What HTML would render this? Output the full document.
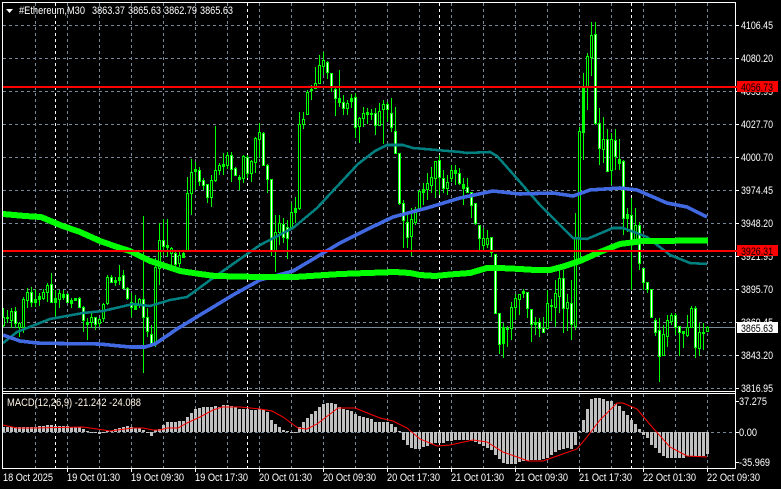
<!DOCTYPE html>
<html><head><meta charset="utf-8"><title>Ethereum M30</title>
<style>
html,body{margin:0;padding:0;background:#000;width:781px;height:489px;overflow:hidden}
svg{display:block}
text{font-family:"Liberation Sans",sans-serif;font-size:11px;fill:#fff}
</style></head><body>
<svg width="781" height="489" viewBox="0 0 781 489" xmlns="http://www.w3.org/2000/svg">
<rect width="781" height="489" fill="#000"/>
<g shape-rendering="crispEdges" fill="none">
<!-- grid -->
<path stroke="#778899" stroke-dasharray="3 3" d="M3 25.5H735M3 58.5H735M3 91.5H735M3 124.5H735M3 157.5H735M3 190.5H735M3 223.5H735M3 256.5H735M3 289.5H735M3 322.5H735M3 355.5H735M3 388.5H735M3 432.5H735"/>
<path stroke="#778899" stroke-dasharray="3 3" d="M35.5 3V391M67.5 3V391M99.5 3V391M131.5 3V391M163.5 3V391M195.5 3V391M227.5 3V391M259.5 3V391M291.5 3V391M323.5 3V391M355.5 3V391M387.5 3V391M419.5 3V391M451.5 3V391M483.5 3V391M515.5 3V391M547.5 3V391M579.5 3V391M611.5 3V391M643.5 3V391M675.5 3V391M707.5 3V391M35.5 394V468M67.5 394V468M99.5 394V468M131.5 394V468M163.5 394V468M195.5 394V468M227.5 394V468M259.5 394V468M291.5 394V468M323.5 394V468M355.5 394V468M387.5 394V468M419.5 394V468M451.5 394V468M483.5 394V468M515.5 394V468M547.5 394V468M579.5 394V468M611.5 394V468M643.5 394V468M675.5 394V468M707.5 394V468"/>
<path stroke="#fff" stroke-dasharray="3 3" d="M55.5 3V391M247.5 3V391M439.5 3V391M631.5 3V391M55.5 394V468M247.5 394V468M439.5 394V468M631.5 394V468"/>
<!-- bid line -->
<path stroke="#778899" d="M3 327.5H735"/>
<!-- wicks -->
<path stroke="#00ff00" d="M3.5 308V327M7.5 310V323M11.5 308V328M15.5 307V328M19.5 322V337M23.5 297V333M27.5 288V308M31.5 287V307M35.5 289V307M39.5 293V306M43.5 289V300M47.5 283V302M51.5 273V302M55.5 290V317M59.5 290V308M63.5 290V300M67.5 293V302M71.5 298V308M75.5 298V301M79.5 297V308M83.5 306V332M87.5 318V340M91.5 312V328M95.5 317V330M99.5 318V327M103.5 303V322M107.5 275V305M111.5 275V283M115.5 277V286M119.5 265V285M123.5 270V288M127.5 287V300M131.5 293V317M135.5 295V310M139.5 298V308M143.5 216V373M147.5 308V337M151.5 325V347M155.5 258V347M159.5 223V285M163.5 219V255M167.5 219V257M171.5 247V267M175.5 252V270M179.5 252V267M183.5 252V257M187.5 177V252M191.5 159V215M195.5 162V190M199.5 167V186M203.5 178V190M207.5 184V203M211.5 175V207M215.5 126V182M219.5 163V175M223.5 153V175M227.5 152V169M231.5 152V182M235.5 167V176M239.5 175V190M243.5 155V183M247.5 155V178M251.5 160V182M255.5 137V173M259.5 123V158M263.5 132V166M267.5 164V193M271.5 179V256M275.5 215V272M279.5 215V245M283.5 218V243M287.5 220V259M291.5 203V228M295.5 197V223M299.5 112V210M303.5 112V129M307.5 90V115M311.5 85V100M315.5 67V89M319.5 55V83M323.5 52V75M327.5 61V79M331.5 73V92M335.5 86V116M339.5 70V107M343.5 95V115M347.5 100V115M351.5 94V108M355.5 93V138M359.5 117V143M363.5 107V127M367.5 108V124M371.5 109V120M375.5 108V135M379.5 103V125M383.5 100V144M387.5 102V122M391.5 98V132M395.5 107V153M399.5 153V205M403.5 200V248M407.5 213V248M411.5 208V256M415.5 207V225M419.5 190V208M423.5 183V205M427.5 173V200M431.5 167V193M435.5 161V198M439.5 155V195M443.5 170V193M447.5 175V195M451.5 165V182M455.5 165V185M459.5 168V185M463.5 178V205M467.5 178V193M471.5 192V218M475.5 203V225M479.5 225V250M483.5 228V250M487.5 230V248M491.5 237V257M495.5 254V313M499.5 313V354M503.5 323V358M507.5 326V347M511.5 302V340M515.5 294V320M519.5 294V315M523.5 289V298M527.5 292V318M531.5 309V342M535.5 317V335M539.5 318V337M543.5 317V333M547.5 290V328M551.5 299V321M555.5 280V327M559.5 270V313M563.5 270V333M567.5 294V331M571.5 280V340M575.5 213V330M579.5 127V262M583.5 73V160M587.5 53V110M591.5 22V76M595.5 22V125M599.5 108V165M603.5 117V163M607.5 129V171M611.5 133V185M615.5 129V170M619.5 139V170M623.5 160V235M627.5 208V232M631.5 198V290M635.5 208V245M639.5 222V270M643.5 268V290M647.5 282V293M651.5 289V318M655.5 318V336M659.5 318V382M663.5 325V356M667.5 315V347M671.5 313V325M675.5 313V335M679.5 326V356M683.5 331V348M687.5 315V337M691.5 306V328M695.5 306V358M699.5 323V356M703.5 323V350M707.5 326V332"/>
<!-- bodies -->
<path stroke="#00ff00" stroke-width="3" d="M3.5 317V326M7.5 317V319M11.5 311V321M15.5 311V324M19.5 323V328M23.5 299V328M27.5 292V301M31.5 292V303M35.5 299V303M39.5 296V300M43.5 292V299M47.5 285V293M51.5 284V303M55.5 298V303M59.5 293V300M63.5 294V298M67.5 294V303M71.5 300V304M75.5 298V301M79.5 298V308M83.5 307V321M87.5 322V325M91.5 317V323M95.5 317V325M99.5 319V324M103.5 304V319M107.5 277V304M111.5 277V283M115.5 280V283M119.5 277V281M123.5 275V289M127.5 288V299M131.5 302V308M135.5 304V310M139.5 299V305M143.5 299V318M147.5 317V332M151.5 334V344M155.5 267V345M159.5 240V269M163.5 240V247M167.5 245V248M171.5 248V254M175.5 253V265M179.5 255V264M183.5 253V258M187.5 193V251M191.5 172V194M195.5 169V172M199.5 170V182M203.5 180V186M207.5 184V198M211.5 180V198M215.5 170V181M219.5 165V171M223.5 164V167M227.5 155V166M231.5 155V170M235.5 168V176M239.5 177V180M243.5 156V179M247.5 157V174M251.5 161V174M255.5 138V163M259.5 132V140M263.5 133V166M267.5 165V180M271.5 179V252M275.5 232V251M279.5 223V233M283.5 224V238M287.5 227V239M291.5 212V228M295.5 208V213M299.5 124V209M303.5 119V125M307.5 92V115M311.5 89V91M315.5 83V89M319.5 65V84M323.5 60V67M327.5 62V73M331.5 73V88M335.5 89V99M339.5 98V103M343.5 102V109M347.5 103V109M351.5 98V102M355.5 97V128M359.5 118V127M363.5 113V119M367.5 112V115M371.5 113V115M375.5 113V126M379.5 111V126M383.5 104V110M387.5 104V110M391.5 113V128M395.5 131V154M399.5 153V204M403.5 203V221M407.5 222V238M411.5 219V237M415.5 209V223M419.5 191V209M423.5 189V193M427.5 183V190M431.5 177V186M435.5 161V179M439.5 160V178M443.5 178V189M447.5 182V189M451.5 170V179M455.5 170V174M459.5 173V184M463.5 184V189M467.5 187V193M471.5 192V206M475.5 203V224M479.5 225V239M483.5 238V246M487.5 238V245M491.5 237V253M495.5 254V314M499.5 313V345M503.5 327V344M507.5 328V330M511.5 307V329M515.5 298V308M519.5 294V300M523.5 291V294M527.5 292V309M531.5 309V325M535.5 322V325M539.5 322V329M543.5 328V333M547.5 303V329M551.5 305V307M555.5 293V308M559.5 278V297M563.5 278V309M567.5 302V309M571.5 303V325M575.5 238V327M579.5 131V259M583.5 88V133M587.5 56V87M591.5 35V58M595.5 34V124M599.5 123V149M603.5 139V150M607.5 139V172M611.5 139V171M615.5 140V157M619.5 159V164M623.5 161V219M627.5 214V219M631.5 215V241M635.5 225V241M639.5 225V264M643.5 268V283M647.5 282V290M651.5 289V318M655.5 320V333M659.5 330V357M663.5 334V356M667.5 320V337M671.5 315V322M675.5 315V328M679.5 326V333M683.5 331V334M687.5 327V336M691.5 308V328M695.5 308V348M699.5 332V349M703.5 332V334M707.5 327V332"/>
<!-- white interiors -->
<path stroke="#fff" d="M15.5 312V323M31.5 293V302M51.5 285V302M67.5 295V302M79.5 299V307M83.5 308V320M95.5 318V324M111.5 278V282M123.5 276V288M127.5 289V298M131.5 303V307M143.5 300V317M147.5 318V331M151.5 335V343M163.5 241V246M175.5 254V264M199.5 171V181M203.5 181V185M207.5 185V197M231.5 156V169M235.5 169V175M247.5 158V173M263.5 134V165M267.5 166V179M271.5 180V251M283.5 225V237M287.5 228V238M327.5 63V72M331.5 74V87M335.5 90V98M343.5 103V108M355.5 98V127M375.5 114V125M387.5 105V109M391.5 114V127M395.5 132V153M399.5 154V203M403.5 204V220M407.5 223V237M439.5 161V177M443.5 179V188M459.5 174V183M467.5 188V192M471.5 193V205M475.5 204V223M479.5 226V238M491.5 238V252M495.5 255V313M499.5 314V344M527.5 293V308M531.5 310V324M539.5 323V328M543.5 329V332M563.5 279V308M571.5 304V324M595.5 35V123M599.5 124V148M607.5 140V171M615.5 141V156M623.5 162V218M631.5 216V240M639.5 226V263M643.5 269V282M647.5 283V289M651.5 290V317M655.5 321V332M659.5 331V356M675.5 316V327M679.5 327V332M695.5 309V347"/>
<!-- black interiors -->
<path stroke="#000" d="M3.5 318V325M11.5 312V320M19.5 324V327M23.5 300V327M27.5 293V300M43.5 293V298M47.5 286V292M59.5 294V299M91.5 318V322M99.5 320V323M103.5 305V318M107.5 278V303M139.5 300V304M155.5 268V344M159.5 241V268M171.5 249V253M179.5 256V263M187.5 194V250M191.5 173V193M211.5 181V197M215.5 171V180M219.5 166V170M227.5 156V165M243.5 157V178M251.5 162V173M255.5 139V162M259.5 133V139M275.5 233V250M279.5 224V232M291.5 213V227M299.5 125V208M303.5 120V124M307.5 93V114M315.5 84V88M319.5 66V83M323.5 61V66M347.5 104V108M359.5 119V126M363.5 114V118M379.5 112V125M383.5 105V109M411.5 220V236M415.5 210V222M419.5 192V208M427.5 184V189M431.5 178V185M435.5 162V178M447.5 183V188M451.5 171V178M483.5 239V245M487.5 239V244M511.5 308V328M515.5 299V307M519.5 295V299M547.5 304V328M555.5 294V307M559.5 279V296M567.5 303V308M575.5 239V326M579.5 132V258M587.5 57V86M591.5 36V57M603.5 140V149M611.5 140V170M635.5 226V240M663.5 335V355M667.5 321V336M671.5 316V321M687.5 328V335M691.5 309V327M699.5 333V348M707.5 328V331"/>
<!-- histogram -->
<path stroke="#c0c0c0" stroke-width="3" d="M3.5 427V432M7.5 427V432M11.5 427V432M15.5 427V432M19.5 427V432M23.5 427V432M27.5 427V432M31.5 427V432M35.5 427V432M39.5 426V432M43.5 426V432M47.5 425V432M51.5 425V432M55.5 426V432M59.5 426V432M63.5 426V432M67.5 426V432M71.5 427V432M75.5 427V432M79.5 427V432M83.5 429V432M87.5 431V432M91.5 432V433M95.5 432V433M99.5 432V434M103.5 432V433M107.5 431V432M111.5 431V432M115.5 429V432M119.5 428V432M123.5 427V432M127.5 426V432M131.5 427V432M135.5 428V432M139.5 428V432M143.5 430V432M147.5 432V433M151.5 432V436M155.5 430V432M159.5 429V432M163.5 425V432M167.5 422V432M171.5 422V432M175.5 422V432M179.5 421V432M183.5 421V432M187.5 417V432M191.5 413V432M195.5 409V432M199.5 408V432M203.5 407V432M207.5 407V432M211.5 407V432M215.5 406V432M219.5 407V432M223.5 405V432M227.5 405V432M231.5 406V432M235.5 407V432M239.5 409V432M243.5 409V432M247.5 409V432M251.5 410V432M255.5 410V432M259.5 409V432M263.5 410V432M267.5 412V432M271.5 420V432M275.5 424V432M279.5 427V432M283.5 430V432M287.5 431V432M291.5 432V433M295.5 432V433M299.5 427V432M303.5 422V432M307.5 418V432M311.5 414V432M315.5 411V432M319.5 407V432M323.5 404V432M327.5 403V432M331.5 403V432M335.5 404V432M339.5 407V432M343.5 409V432M347.5 410V432M351.5 411V432M355.5 414V432M359.5 416V432M363.5 417V432M367.5 418V432M371.5 419V432M375.5 422V432M379.5 422V432M383.5 422V432M387.5 422V432M391.5 424V432M395.5 427V432M399.5 431V432M403.5 432V440M407.5 432V445M411.5 432V448M415.5 432V449M419.5 432V449M423.5 432V447M427.5 432V446M431.5 432V444M435.5 432V443M439.5 432V443M443.5 432V443M447.5 432V441M451.5 432V441M455.5 432V440M459.5 432V440M463.5 432V440M467.5 432V440M471.5 432V441M475.5 432V442M479.5 432V444M483.5 432V446M487.5 432V448M491.5 432V450M495.5 432V455M499.5 432V459M503.5 432V463M507.5 432V464M511.5 432V464M515.5 432V464M519.5 432V462M523.5 432V461M527.5 432V461M531.5 432V460M535.5 432V460M539.5 432V460M543.5 432V459M547.5 432V458M551.5 432V455M555.5 432V452M559.5 432V450M563.5 432V449M567.5 432V448M571.5 432V449M575.5 432V445M579.5 431V432M583.5 420V432M587.5 409V432M591.5 399V432M595.5 398V432M599.5 398V432M603.5 399V432M607.5 401V432M611.5 401V432M615.5 404V432M619.5 406V432M623.5 411V432M627.5 415V432M631.5 420V432M635.5 424V432M639.5 429V432M643.5 432V435M647.5 432V438M651.5 432V445M655.5 432V448M659.5 432V453M663.5 432V456M667.5 432V458M671.5 432V458M675.5 432V458M679.5 432V458M683.5 432V458M687.5 432V456M691.5 432V456M695.5 432V456M699.5 432V456M703.5 432V456M707.5 432V454"/>
</g>
<g fill="none" stroke-linejoin="round" shape-rendering="crispEdges">
<!-- teal MA -->
<polyline stroke="#008080" stroke-width="2.6" points="3,343 17,332 27,328 50,319 83,313 103,311 133,304 150,306 170,300 187,297 213,278 260,245 293,228 317,208 358,164 375,151 387,145 403,145 413,148 460,152 467,153 490,152 497,156 505,165 520,182 540,205 573,238 587,239 613,228 623,228 647,237 670,255 690,263 707,264"/>
<!-- blue MA -->
<polyline stroke="#4169e1" stroke-width="3.6" points="3,335 20,341 37,343 60,343.5 99,344 130,347 145,347 155,344 177,329 200,315 233,295 260,280 293,271 320,255 340,243 370,228 393,217 427,208 460,198 493,191 520,194 553,193 573,196 590,190 620,188 637,190 667,203 687,207 707,217"/>
<!-- lime MA -->
<polyline stroke="#00ff00" stroke-width="6" points="3,214 25,216 41,217 60,225 80,232 100,241 120,248 130,251 150,261 180,271 200,274 215,276 260,277 295,277 310,276 340,274 395,272 410,273 420,275 435,276 450,274.5 470,273 487,268 500,268 520,269 535,270 550,270 565,266 580,261 600,252 620,244 643,241 708,240.5"/>
</g>
<g fill="none">
<!-- signal line -->
<polyline stroke="#ff0000" stroke-width="1" points="3,425 17,428 33,428 83,427 97,429 110,431 133,428 143,428 153,430 160,430 167,428 178,428 187,423 200,417 213,410 222,407 240,407 250,408 260,409 272,411 283,417 298,428 307,429 317,424 338,408 355,408 380,418 393,421 407,428 420,439 437,446 450,445 473,440 487,442 503,452 520,458 528,461 543,461 557,456 577,449 587,437 600,420 617,403 623,403 637,409 653,428 670,447 687,456 707,457"/>
</g>
<g shape-rendering="crispEdges">
<!-- frame -->
<path fill="none" stroke="#fff" d="M2.5 2.5H735.5V468.5H2.5ZM2.5 391.5H735.5M2.5 393.5H735.5"/>
<!-- ticks -->
<path fill="none" stroke="#fff" d="M736 25.5H739M736 58.5H739M736 91.5H739M736 124.5H739M736 157.5H739M736 190.5H739M736 223.5H739M736 256.5H739M736 289.5H739M736 322.5H739M736 355.5H739M736 388.5H739M736 401.5H739M736 432.5H739M736 462.5H739M67.5 469V472M131.5 469V472M195.5 469V472M259.5 469V472M323.5 469V472M387.5 469V472M451.5 469V472M515.5 469V472M579.5 469V472M643.5 469V472M707.5 469V472"/>
<!-- red lines -->
<rect x="3" y="86" width="734" height="2" fill="#ff0000"/>
<rect x="3" y="250" width="734" height="2" fill="#ff0000"/>
</g>
<polygon points="6,9 13,9 9.5,13" fill="#fff"/>
<text x="19" y="14" textLength="66" lengthAdjust="spacingAndGlyphs">#Ethereum,M30</text>
<text x="92" y="14" textLength="33" lengthAdjust="spacingAndGlyphs">3863.37</text>
<text x="128" y="14" textLength="33" lengthAdjust="spacingAndGlyphs">3865.63</text>
<text x="164" y="14" textLength="33" lengthAdjust="spacingAndGlyphs">3862.79</text>
<text x="200" y="14" textLength="33" lengthAdjust="spacingAndGlyphs">3865.63</text>
<text x="741" y="29" textLength="32" lengthAdjust="spacingAndGlyphs">4106.45</text>
<text x="741" y="62" textLength="32" lengthAdjust="spacingAndGlyphs">4080.20</text>
<text x="741" y="95" textLength="32" lengthAdjust="spacingAndGlyphs">4053.95</text>
<text x="741" y="128" textLength="32" lengthAdjust="spacingAndGlyphs">4027.70</text>
<text x="741" y="161" textLength="32" lengthAdjust="spacingAndGlyphs">4000.70</text>
<text x="741" y="194" textLength="32" lengthAdjust="spacingAndGlyphs">3974.45</text>
<text x="741" y="227" textLength="32" lengthAdjust="spacingAndGlyphs">3948.20</text>
<text x="741" y="260" textLength="32" lengthAdjust="spacingAndGlyphs">3921.95</text>
<text x="741" y="293" textLength="32" lengthAdjust="spacingAndGlyphs">3895.70</text>
<text x="741" y="326" textLength="32" lengthAdjust="spacingAndGlyphs">3869.45</text>
<text x="741" y="359" textLength="32" lengthAdjust="spacingAndGlyphs">3843.20</text>
<text x="741" y="392" textLength="32" lengthAdjust="spacingAndGlyphs">3816.95</text>
<rect x="737" y="81" width="41" height="11" fill="#ff0000" shape-rendering="crispEdges"/>
<text x="741" y="91" textLength="32" lengthAdjust="spacingAndGlyphs" style="fill:#000">4056.73</text>
<rect x="737" y="245" width="41" height="11" fill="#ff0000" shape-rendering="crispEdges"/>
<text x="741" y="255" textLength="32" lengthAdjust="spacingAndGlyphs" style="fill:#000">3926.31</text>
<rect x="737" y="322" width="41" height="11" fill="#fff" shape-rendering="crispEdges"/>
<text x="741" y="332" textLength="32" lengthAdjust="spacingAndGlyphs" style="fill:#000">3865.63</text>
<text x="739" y="405" textLength="28" lengthAdjust="spacingAndGlyphs">37.275</text>
<text x="739" y="436" textLength="18" lengthAdjust="spacingAndGlyphs">0.00</text>
<text x="739" y="466" textLength="31" lengthAdjust="spacingAndGlyphs">-35.969</text>
<text x="7" y="406" textLength="134" lengthAdjust="spacingAndGlyphs" style="fill:#fff5e6">MACD(12,26,9) -21.242 -24.088</text>
<text x="3" y="481" textLength="50" lengthAdjust="spacingAndGlyphs">18 Oct 2025</text>
<text x="67" y="481" textLength="53" lengthAdjust="spacingAndGlyphs">19 Oct 01:30</text>
<text x="131" y="481" textLength="53" lengthAdjust="spacingAndGlyphs">19 Oct 09:30</text>
<text x="195" y="481" textLength="53" lengthAdjust="spacingAndGlyphs">19 Oct 17:30</text>
<text x="259" y="481" textLength="53" lengthAdjust="spacingAndGlyphs">20 Oct 01:30</text>
<text x="323" y="481" textLength="53" lengthAdjust="spacingAndGlyphs">20 Oct 09:30</text>
<text x="387" y="481" textLength="53" lengthAdjust="spacingAndGlyphs">20 Oct 17:30</text>
<text x="451" y="481" textLength="53" lengthAdjust="spacingAndGlyphs">21 Oct 01:30</text>
<text x="515" y="481" textLength="53" lengthAdjust="spacingAndGlyphs">21 Oct 09:30</text>
<text x="579" y="481" textLength="53" lengthAdjust="spacingAndGlyphs">21 Oct 17:30</text>
<text x="643" y="481" textLength="53" lengthAdjust="spacingAndGlyphs">22 Oct 01:30</text>
<text x="707" y="481" textLength="53" lengthAdjust="spacingAndGlyphs">22 Oct 09:30</text>
</svg>
</body></html>
